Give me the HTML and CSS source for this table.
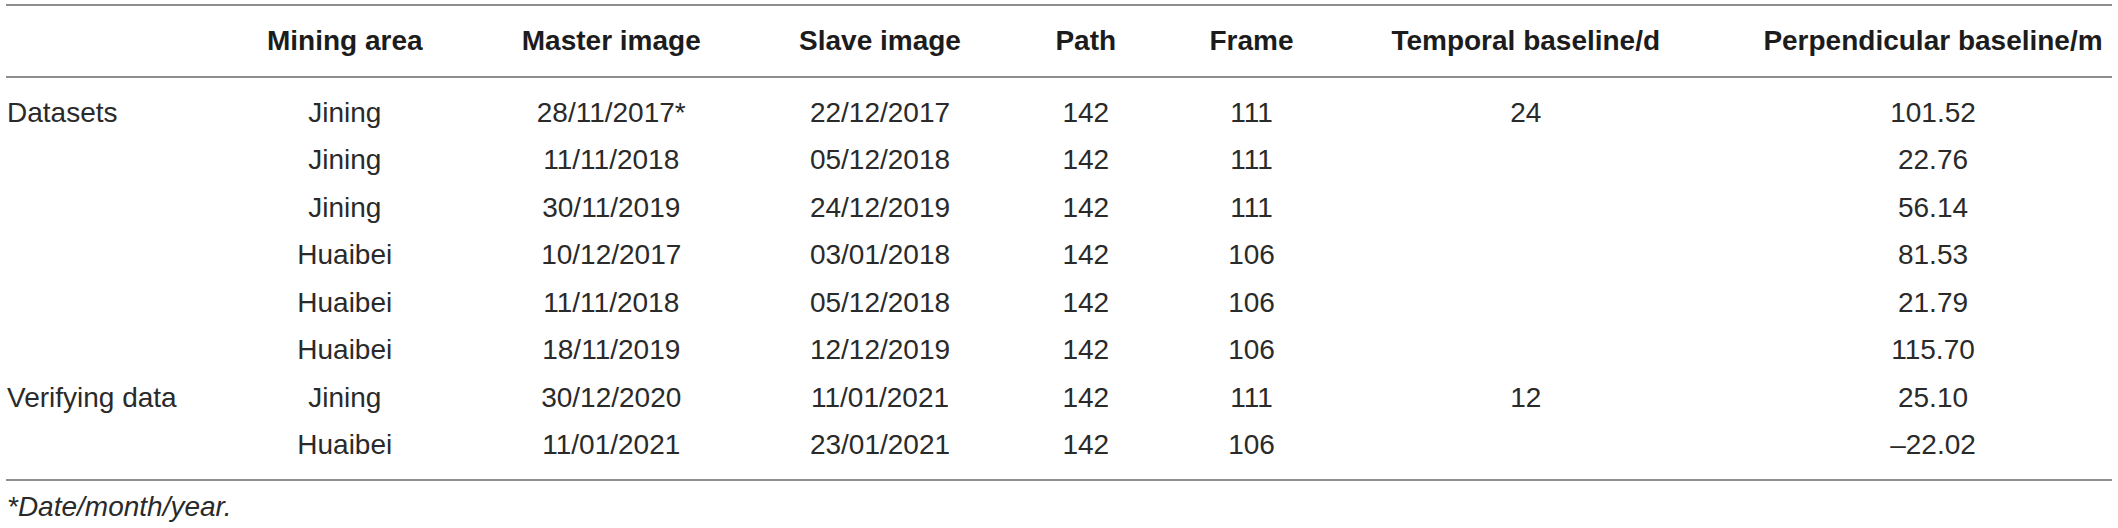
FILE: index.html
```html
<!DOCTYPE html>
<html lang="en">
<head>
<meta charset="utf-8">
<title>Datasets table</title>
<link rel="stylesheet" href="styles.css">
</head>
<body>
<div class="wrap">
  <table class="data">
    <colgroup>
      <col class="c0"><col class="c1"><col class="c2"><col class="c3"><col class="c4"><col class="c5"><col class="c6"><col class="c7">
    </colgroup>
    <thead>
      <tr>
        <th class="first"></th>
        <th>Mining area</th>
        <th>Master image</th>
        <th>Slave image</th>
        <th>Path</th>
        <th>Frame</th>
        <th>Temporal baseline/d</th>
        <th class="last">Perpendicular baseline/m</th>
      </tr>
    </thead>
    <tbody>
      <tr class="top">
        <td class="first">Datasets</td><td>Jining</td><td>28/11/2017*</td><td>22/12/2017</td><td>142</td><td>111</td><td>24</td><td class="last">101.52</td>
      </tr>
      <tr>
        <td class="first"></td><td>Jining</td><td>11/11/2018</td><td>05/12/2018</td><td>142</td><td>111</td><td></td><td class="last">22.76</td>
      </tr>
      <tr>
        <td class="first"></td><td>Jining</td><td>30/11/2019</td><td>24/12/2019</td><td>142</td><td>111</td><td></td><td class="last">56.14</td>
      </tr>
      <tr>
        <td class="first"></td><td>Huaibei</td><td>10/12/2017</td><td>03/01/2018</td><td>142</td><td>106</td><td></td><td class="last">81.53</td>
      </tr>
      <tr>
        <td class="first"></td><td>Huaibei</td><td>11/11/2018</td><td>05/12/2018</td><td>142</td><td>106</td><td></td><td class="last">21.79</td>
      </tr>
      <tr>
        <td class="first"></td><td>Huaibei</td><td>18/11/2019</td><td>12/12/2019</td><td>142</td><td>106</td><td></td><td class="last">115.70</td>
      </tr>
      <tr>
        <td class="first">Verifying data</td><td>Jining</td><td>30/12/2020</td><td>11/01/2021</td><td>142</td><td>111</td><td>12</td><td class="last">25.10</td>
      </tr>
      <tr class="bottom">
        <td class="first"></td><td>Huaibei</td><td>11/01/2021</td><td>23/01/2021</td><td>142</td><td>106</td><td></td><td class="last">–22.02</td>
      </tr>
    </tbody>
  </table>
  <p class="note">*Date/month/year.</p>
</div>
</body>
</html>
```

FILE: styles.css
```css
html, body {
  margin: 0;
  padding: 0;
  background: #ffffff;
}

.wrap {
  padding: 4px 6px 0 6px;
  font-family: "Liberation Sans", Arial, sans-serif;
  font-size: 28px;
  color: #2a2a2a;
}

.data {
  width: 2106px;
  table-layout: fixed;
  border-collapse: collapse;
  border-top: 2px solid #8f8f8f;
  border-bottom: 2px solid #8f8f8f;
}

.c0 { width: 212px; }
.c1 { width: 253.5px; }
.c2 { width: 279.5px; }
.c3 { width: 258px; }
.c4 { width: 153.5px; }
.c5 { width: 178px; }
.c6 { width: 370.5px; }
.c7 { width: 401px; }

.data th,
.data td {
  padding: 0;
  text-align: center;
  white-space: nowrap;
  line-height: 32px;
  vertical-align: middle;
}

.data thead th {
  height: 70px;
  font-weight: bold;
  color: #1c1c1c;
  border-bottom: 2px solid #8f8f8f;
}

.data tbody td {
  height: 47.5px;
  font-weight: normal;
}

.data tbody tr.top td {
  padding-top: 11px;
}

.data tbody tr.bottom td {
  padding-bottom: 10px;
}

.data .first {
  text-align: left;
  padding-left: 1px;
}

.data .last {
  padding-left: 45px;
  padding-right: 2px;
}

.note {
  margin: 10px 0 0 1px;
  font-style: italic;
  line-height: 32px;
}
```
